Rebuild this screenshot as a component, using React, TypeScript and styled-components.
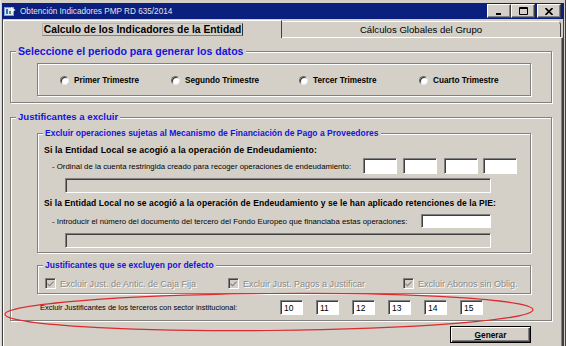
import React from 'react'
import styled, { createGlobalStyle } from 'styled-components'

const GlobalStyle = createGlobalStyle`
  html, body { margin: 0; padding: 0; background: #d4d0c8; }
  body { font-family: "Liberation Sans", Arial, sans-serif; }
`

const Window = styled.div`
  position: relative;
  width: 566px;
  height: 346px;
  box-sizing: border-box;
  padding: 3px 2px 0 2px;
  background: #d4d0c8;
  display: flex;
  flex-direction: column;
  overflow: hidden;
  box-shadow: inset -1px 0 0 #404040, inset 1px 0 0 #e8e6e0;
`

const TitleBar = styled.div`
  flex: none;
  height: 16px;
  background: #0a1f7e;
  display: flex;
  align-items: center;
  padding: 0 3px 0 2px;
`

const TitleIcon = styled.svg`
  width: 12px;
  height: 11px;
  flex: none;
`

const TitleText = styled.span`
  margin-left: 4px;
  color: #e4e4e4;
  font-size: 8.2px;
  flex: 1;
`

const CaptionButton = styled.div<{ $gap?: number }>`
  width: 24px;
  height: 14px;
  box-sizing: border-box;
  margin-left: ${(p) => p.$gap ?? 0}px;
  background: #d4d0c8;
  border: 1px solid;
  border-color: #fff #404040 #404040 #fff;
  box-shadow: inset -1px -1px 0 #808080;
  display: flex;
  align-items: center;
  justify-content: center;
`

const Main = styled.div`
  flex: 1;
  display: flex;
  flex-direction: column;
  border-left: 1px solid #404040;
  border-right: 1px solid #404040;
`

const TabStrip = styled.div`
  flex: none;
  height: 18px;
  display: flex;
  align-items: flex-end;
`

const Tab = styled.div<{ $active?: boolean }>`
  position: relative;
  z-index: ${(p) => (p.$active ? 1 : 0)};
  width: 279px;
  height: ${(p) => (p.$active ? 18 : 16)}px;
  margin-bottom: ${(p) => (p.$active ? -1 : 0)}px;
  box-sizing: border-box;
  background: #d4d0c8;
  border-top: 1px solid #fff;
  border-left: ${(p) => (p.$active ? '1px solid #fff' : 'none')};
  border-right: 1px solid #404040;
  border-radius: ${(p) => (p.$active ? '2px 0 0 0' : '0 4px 0 0')};
  display: flex;
  align-items: center;
  justify-content: center;
  font-size: ${(p) => (p.$active ? 10.3 : 9.6)}px;
  font-weight: ${(p) => (p.$active ? 'bold' : 'normal')};
  color: #000;
`

const TabLabel = styled.span`
  padding: 0 1px;
  line-height: 11px;
  border: 1px solid;
  border-color: #b8b4ac #303030 #808080 #b8b4ac;
`

const Page = styled.div`
  flex: 1;
  border-top: 1px solid #fff;
  border-left: 1px solid #fff;
  border-right: 1px solid #404040;
  box-shadow: inset -1px 0 0 #808080;
`

const Group = styled.fieldset<{ $top: number; $width: number; $left?: number }>`
  box-sizing: border-box;
  width: ${(p) => p.$width}px;
  margin: ${(p) => p.$top}px 0 0 ${(p) => p.$left ?? 0}px;
  padding: 0;
  min-width: 0;
  border: 1px solid #808080;
  box-shadow: inset 1px 1px 0 #fff, 1px 1px 0 #fff;
`

const Legend = styled.legend<{ $size: number; $line: number }>`
  margin-left: 5px;
  padding: 0 2px;
  background: #d4d0c8;
  color: #1414dc;
  font-weight: bold;
  font-size: ${(p) => p.$size}px;
  line-height: ${(p) => p.$line}px;
`

const GroupBody = styled.div<{ $pad: string }>`
  padding: ${(p) => p.$pad};
  display: flex;
  flex-direction: column;
`

const RadioBox = styled.div`
  height: 33px;
  box-sizing: border-box;
  border: 1px solid #808080;
  box-shadow: inset 1px 1px 0 #fff, 1px 1px 0 #fff;
  display: flex;
  align-items: center;
  padding: 2px 0 0 22px;
`

const RadioItem = styled.label<{ $width?: number }>`
  display: flex;
  align-items: center;
  width: ${(p) => (p.$width ? `${p.$width}px` : 'auto')};
  font-size: 8.2px;
  font-weight: bold;
  color: #000;
`

const RadioDot = styled.span`
  width: 9px;
  height: 9px;
  box-sizing: border-box;
  border-radius: 50%;
  background: #fff;
  border: 1px solid;
  border-color: #707070 #e8e8e8 #e8e8e8 #707070;
  box-shadow: inset 1px 1px 0 #303030;
  margin-right: 5px;
`

const BoldLine = styled.div<{ $mt: number; $size: number }>`
  margin-top: ${(p) => p.$mt}px;
  height: 14px;
  line-height: 14px;
  font-size: ${(p) => p.$size}px;
  font-weight: bold;
  letter-spacing: 0.1px;
  color: #000;
  white-space: nowrap;
`

const FieldRow = styled.div<{ $mt: number; $h: number }>`
  margin-top: ${(p) => p.$mt}px;
  height: ${(p) => p.$h}px;
  display: flex;
  align-items: center;
`

const SmallLabel = styled.span<{ $width: number; $indent: number; $size?: number }>`
  flex: none;
  box-sizing: border-box;
  width: ${(p) => p.$width}px;
  padding-left: ${(p) => p.$indent}px;
  font-size: ${(p) => p.$size ?? 7.8}px;
  color: #000;
  white-space: nowrap;
`

const TextBox = styled.div<{ $w: number; $h: number; $gap?: number; $disabled?: boolean }>`
  flex: none;
  box-sizing: border-box;
  width: ${(p) => p.$w}px;
  height: ${(p) => p.$h}px;
  margin-left: ${(p) => p.$gap ?? 0}px;
  background: ${(p) => (p.$disabled ? '#d4d0c8' : '#fff')};
  border: 1px solid;
  border-color: #808080 #fff #fff #808080;
  box-shadow: inset 1px 1px 0 #404040;
  padding: 1px 0 0 3px;
  font-size: 8.5px;
  line-height: 12px;
  color: #000;
`

const WideField = styled(TextBox)`
  margin-left: 21px;
`

const CheckRow = styled.div`
  height: 13px;
  display: flex;
  align-items: center;
`

const CheckItem = styled.label<{ $width?: number }>`
  display: flex;
  align-items: center;
  width: ${(p) => (p.$width ? `${p.$width}px` : 'auto')};
  font-size: 9px;
  color: #8a8a8a;
  text-shadow: 1px 1px 0 #fff;
  white-space: nowrap;
`

const CheckBox = styled.span`
  width: 11px;
  height: 11px;
  box-sizing: border-box;
  flex: none;
  margin-right: 4px;
  background: #d4d0c8;
  border: 1px solid;
  border-color: #808080 #fff #fff #808080;
  box-shadow: inset 1px 1px 0 #404040;
  display: flex;
  align-items: center;
  justify-content: center;
`

const ButtonRow = styled.div`
  width: 542px;
  margin-left: 6px;
  padding: 5px 21px 0 0;
  box-sizing: border-box;
  display: flex;
  justify-content: flex-end;
`

const Button = styled.div`
  width: 81px;
  height: 17px;
  box-sizing: border-box;
  border: 1px solid #000;
  background: #d4d0c8;
  box-shadow: inset 1px 1px 0 #fff, inset -1px -1px 0 #404040, inset -2px -2px 0 #808080;
  display: flex;
  align-items: center;
  justify-content: center;
  font-size: 8.3px;
  font-weight: bold;
  color: #000;

  u { text-decoration: underline; }
`

const Annotation = styled.svg`
  position: absolute;
  left: 0;
  top: 286px;
  width: 545px;
  height: 56px;
  pointer-events: none;
  overflow: visible;
`

const Check = () => (
  <svg width="7" height="7" viewBox="0 0 7 7">
    <path d="M0.5 3 L2.5 5 L6.5 1 L6.5 2.6 L2.5 6.5 L0.5 4.6 Z" fill="#808080" />
  </svg>
)

const periods: [string, number?][] = [
  ['Primer Trimestre', 111],
  ['Segundo Trimestre', 128],
  ['Tercer Trimestre', 120],
  ['Cuarto Trimestre'],
]

const sectors = ['10', '11', '12', '13', '14', '15']

export default function App() {
  return (
    <>
      <GlobalStyle />
      <Window>
        <TitleBar>
          <TitleIcon viewBox="0 0 12 11">
            <rect x="0.5" y="1.5" width="9" height="8" fill="#dfe8f4" stroke="#7ea0d0" />
            <rect x="2" y="3" width="2" height="5" fill="#2f6fd0" />
            <rect x="5" y="5" width="2" height="3" fill="#3aa04a" />
            <path d="M7 1 L11.5 4 L7 7 Z" fill="#f0f0f0" />
          </TitleIcon>
          <TitleText>Obtención Indicadores PMP RD 635/2014</TitleText>
          <CaptionButton>
            <svg width="8" height="8" viewBox="0 0 8 8"><rect x="1" y="6" width="5" height="2" fill="#000" /></svg>
          </CaptionButton>
          <CaptionButton>
            <svg width="9" height="8" viewBox="0 0 9 8"><path d="M0.5 0.5 H8.5 V7.5 H0.5 Z M0.5 1.5 H8.5" fill="none" stroke="#000" /></svg>
          </CaptionButton>
          <CaptionButton $gap={2}>
            <svg width="8" height="7" viewBox="0 0 8 7"><path d="M0.5 0 L7.5 7 M7.5 0 L0.5 7" stroke="#000" strokeWidth="1.6" /></svg>
          </CaptionButton>
        </TitleBar>

        <Main>
          <TabStrip>
            <Tab $active>
              <TabLabel>Calculo de los Indicadores de la Entidad</TabLabel>
            </Tab>
            <Tab>Cálculos Globales del Grupo</Tab>
          </TabStrip>

          <Page>
            <Group $top={6} $left={6} $width={542}>
              <Legend $size={10.6} $line={14}>Seleccione el periodo para generar los datos</Legend>
              <GroupBody $pad="5px 20px 6px 26px">
                <RadioBox>
                  {periods.map(([label, w]) => (
                    <RadioItem key={label} $width={w}>
                      <RadioDot />
                      {label}
                    </RadioItem>
                  ))}
                </RadioBox>
              </GroupBody>
            </Group>

            <Group $top={7} $left={6} $width={542}>
              <Legend $size={9.6} $line={14}>Justificantes a excluir</Legend>
              <GroupBody $pad="3px 20px 5px 26px">
                <Group $top={0} $width={494}>
                  <Legend $size={8.5} $line={12}>
                    Excluir operaciones sujetas al Mecanismo de Financiación de Pago a Proveedores
                  </Legend>
                  <GroupBody $pad="4px 6px 4px 6px">
                    <BoldLine $mt={0} $size={8.8}>Si la Entidad Local se acogió a la operación de Endeudamiento:</BoldLine>
                    <FieldRow $mt={1} $h={16}>
                      <SmallLabel $width={319} $indent={8}>
                        - Ordinal de la cuenta restringida creado para recoger operaciones de endeudamiento:
                      </SmallLabel>
                      <TextBox $w={34} $h={16} />
                      <TextBox $w={34} $h={16} $gap={6} />
                      <TextBox $w={34} $h={16} $gap={7} />
                      <TextBox $w={34} $h={16} $gap={5} />
                    </FieldRow>
                    <FieldRow $mt={4} $h={15}>
                      <WideField $w={426} $h={15} $disabled />
                    </FieldRow>
                    <BoldLine $mt={3} $size={8.5}>
                      Si la Entidad Local no se acogió a la operación de Endeudamiento y se le han aplicado retenciones de la PIE:
                    </BoldLine>
                    <FieldRow $mt={4} $h={14}>
                      <SmallLabel $width={377} $indent={8}>
                        - Introducir el número del documento del tercero del Fondo Europeo que financiaba estas operaciones:
                      </SmallLabel>
                      <TextBox $w={70} $h={14} />
                    </FieldRow>
                    <FieldRow $mt={5} $h={15}>
                      <WideField $w={426} $h={15} $disabled />
                    </FieldRow>
                  </GroupBody>
                </Group>

                <Group $top={6} $width={494}>
                  <Legend $size={8.5} $line={12}>Justificantes que se excluyen por defecto</Legend>
                  <GroupBody $pad="6px 6px 3px 7px">
                    <CheckRow>
                      <CheckItem $width={183}><CheckBox><Check /></CheckBox>Excluir Just. de Antic. de Caja Fija</CheckItem>
                      <CheckItem $width={175}><CheckBox><Check /></CheckBox>Excluir Just. Pagos a Justificar</CheckItem>
                      <CheckItem><CheckBox><Check /></CheckBox>Excluir Abonos sin Oblig.</CheckItem>
                    </CheckRow>
                  </GroupBody>
                </Group>

                <FieldRow $mt={6} $h={15}>
                  <SmallLabel $width={243} $indent={3} $size={7.5}>
                    Excluir Justificantes de los terceros con sector institucional:
                  </SmallLabel>
                  {sectors.map((s, i) => (
                    <TextBox key={s} $w={23} $h={15} $gap={i === 0 ? 0 : 13}>{s}</TextBox>
                  ))}
                </FieldRow>
              </GroupBody>
            </Group>

            <ButtonRow>
              <Button><u>G</u>enerar</Button>
            </ButtonRow>
          </Page>
        </Main>

        <Annotation viewBox="0 0 545 56">
          <ellipse cx="269" cy="26" rx="264" ry="18.5" fill="none" stroke="#dc2a2e" strokeWidth="1.2" transform="rotate(-0.5 269 26)" />
        </Annotation>
      </Window>
    </>
  )
}
